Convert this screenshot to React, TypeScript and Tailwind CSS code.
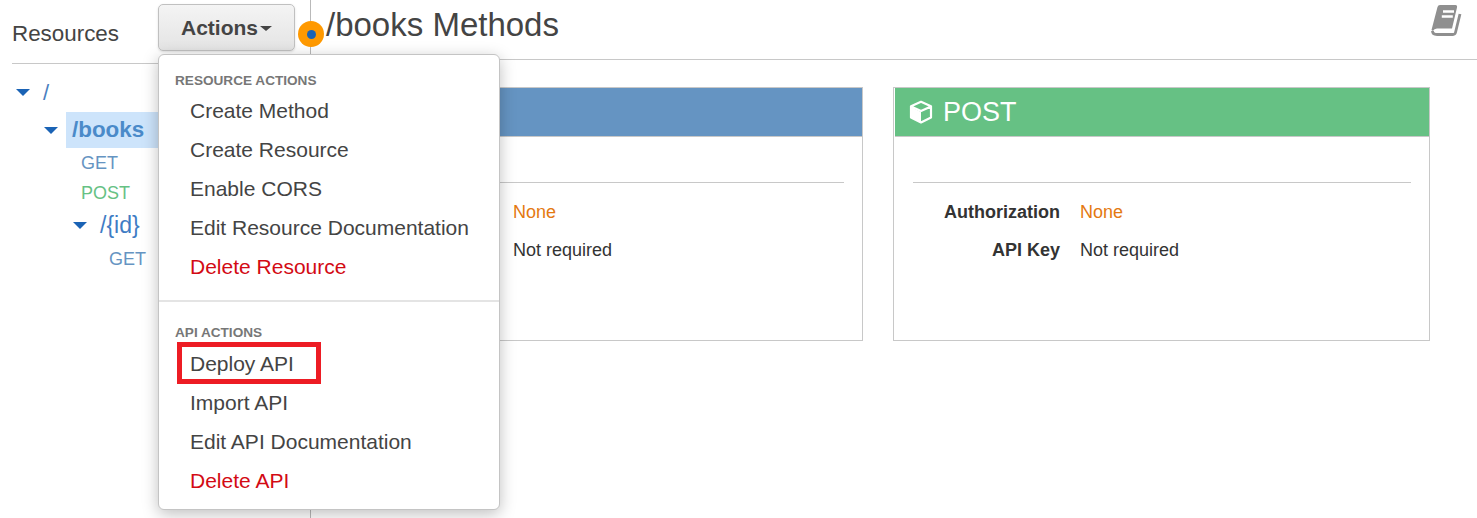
function Caret({ className }: { className: string }) {
  return <span className={`inline-block w-0 h-0 border-x-[7px] border-x-transparent border-t-[7px] border-t-[#1a63b5] ${className}`} />
}

function CubeIcon() {
  return (
    <svg width="24" height="24" viewBox="0 0 24 24" className="shrink-0">
      <path d="M2 7 L12 12 V22.5 L2 17.5 Z" fill="#fff" />
      <path d="M12 1.8 L22 6.3 V17.5 L12 22.5 L2 17.5 V6.3 Z M2 6.5 L12 11 L22 6.5" fill="none" stroke="#fff" strokeWidth="2.2" strokeLinejoin="round" />
    </svg>
  )
}

function BookIcon() {
  return (
    <svg width="32" height="33" viewBox="0 0 32 33" className="mt-[4px] mr-[15px] shrink-0">
      <path d="M10 1 H25.5 Q27.5 1 27 3.5 L22 24.5 H7 Q4 24.5 3 27 L1.5 26 L7.5 3 Q8 1 10 1 Z" fill="#8f8f8f" />
      <path d="M13 7.5 H24 M11.8 12.5 H22.8" stroke="#fff" strokeWidth="2.4" />
      <path d="M2.5 27 Q2.5 30.5 7 30.5 H23 Q25 30.5 25.5 28.5 L30 10" fill="none" stroke="#8f8f8f" strokeWidth="2.8" />
    </svg>
  )
}

function MethodCard({ name, color }: { name: string; color: string }) {
  return (
    <div className="w-[537px] h-[254px] border border-[#c8c8c8] bg-white">
      <div className={`h-[49px] ml-px flex items-center gap-[10px] pl-[14px] text-white text-[27px] border-b border-[#c8c8c8] ${color}`}>
        <CubeIcon />
        <span>{name}</span>
      </div>
      <div className="ml-[19px] mr-[18px] mt-[45px] border-t border-[#c8c8c8] pt-[16px] text-[18px] leading-[26px]">
        <div className="flex">
          <span className="w-[147px] text-right font-bold text-[#333]">Authorization</span>
          <span className="ml-[20px] text-[#e47911]">None</span>
        </div>
        <div className="flex mt-[12px]">
          <span className="w-[147px] text-right font-bold text-[#333]">API Key</span>
          <span className="ml-[20px] text-[#333]">Not required</span>
        </div>
      </div>
    </div>
  )
}

function MenuItem({ label, danger }: { label: string; danger?: boolean }) {
  return (
    <div className={`h-[39px] pl-[31px] flex items-center text-[21px] ${danger ? 'text-[#d30a14]' : 'text-[#444]'}`}>
      {label}
    </div>
  )
}

function MenuLabel({ label }: { label: string }) {
  return <div className="pl-[16px] h-[20px] flex items-center text-[13.6px] font-bold uppercase text-[#777]">{label}</div>
}

export default function App() {
  return (
    <div className="relative w-[1477px] h-[518px] overflow-hidden bg-white flex font-['Liberation_Sans',Arial,sans-serif]">
      {/* Sidebar */}
      <div className="w-[311px] shrink-0 border-r border-[#b9b9b9] pl-[12px]">
        <div className="h-[64px] border-b border-[#c8c8c8] flex items-center gap-[39px]">
          <span className="w-[107px] whitespace-nowrap text-[22.4px] text-[#444] mt-[4px]">Resources</span>
          <button className="w-[137px] h-[47px] -mt-[9px] pt-[2px] rounded-[5px] border border-[#c0c0c0] bg-gradient-to-b from-[#f4f4f4] to-[#e4e4e4] shadow-sm flex items-center justify-center gap-[2px] text-[21px] font-bold text-[#444]">
            Actions
            <span className="inline-block w-0 h-0 border-x-[6px] border-x-transparent border-t-[5px] border-t-[#444]" />
          </button>
        </div>
        <div className="text-[#4a7fc0]">
          <div className="h-[35px] mt-[11px] flex items-center text-[22px]">
            <Caret className="ml-[4px]" />
            <span className="ml-[13px]">/</span>
          </div>
          <div className="h-[36px] mt-[2px] flex items-center">
            <Caret className="ml-[32px]" />
            <span className="ml-[8px] pl-[6px] w-[100px] h-full flex items-center bg-[#cde4fb] text-[22.4px] font-bold text-[#4a8ac9]">/books</span>
          </div>
          <div className="ml-[69px] h-[30px] flex items-center text-[18px] text-[#6594c2]">GET</div>
          <div className="ml-[69px] h-[30px] flex items-center text-[18px] text-[#66c184]">POST</div>
          <div className="h-[36px] -mt-[1px] flex items-center text-[23px]">
            <Caret className="ml-[61px]" />
            <span className="ml-[13px] text-[#3f7cc4]">/{'{id}'}</span>
          </div>
          <div className="ml-[97px] h-[30px] mt-[1px] flex items-center text-[18px] text-[#6594c2]">GET</div>
        </div>
      </div>

      {/* Main */}
      <div className="flex-1 min-w-0">
        <div className="h-[60px] border-b border-[#c8c8c8] pl-[15px] flex justify-between">
          <h1 className="text-[33px] leading-[50px] text-[#444]">/books Methods</h1>
          <BookIcon />
        </div>
        <div className="flex gap-[30px] pl-[15px] pt-[27px]">
          <MethodCard name="GET" color="bg-[#6594c2]" />
          <MethodCard name="POST" color="bg-[#66c184]" />
        </div>
      </div>

      {/* Orange marker over the header */}
      <div className="absolute left-[298px] top-[21px] w-[26px] h-[26px] rounded-full bg-[#ff9900] flex items-center justify-center">
        <div className="w-[9px] h-[9px] rounded-full bg-[#1a63b5]" />
      </div>

      {/* Actions dropdown */}
      <div className="absolute left-[158px] top-[54px] w-[342px] h-[456px] bg-white border border-[#c4c4c4] rounded-[6px] shadow-[0_4px_16px_rgba(0,0,0,0.25)] pt-[16px]">
        <MenuLabel label="Resource Actions" />
        <div>
          <MenuItem label="Create Method" />
          <MenuItem label="Create Resource" />
          <MenuItem label="Enable CORS" />
          <MenuItem label="Edit Resource Documentation" />
          <MenuItem label="Delete Resource" danger />
        </div>
        <div className="mt-[14px] border-t-2 border-[#e4e4e4]" />
        <div className="mt-[21px]">
          <MenuLabel label="API Actions" />
        </div>
        <div className="mt-[1px]">
          <MenuItem label="Deploy API" />
          <MenuItem label="Import API" />
          <MenuItem label="Edit API Documentation" />
          <MenuItem label="Delete API" danger />
        </div>
        {/* Highlight box round Deploy API */}
        <div className="absolute left-[18px] top-[287px] w-[144px] h-[42px] border-[5px] border-[#ed1c24]" />
      </div>
    </div>
  )
}
